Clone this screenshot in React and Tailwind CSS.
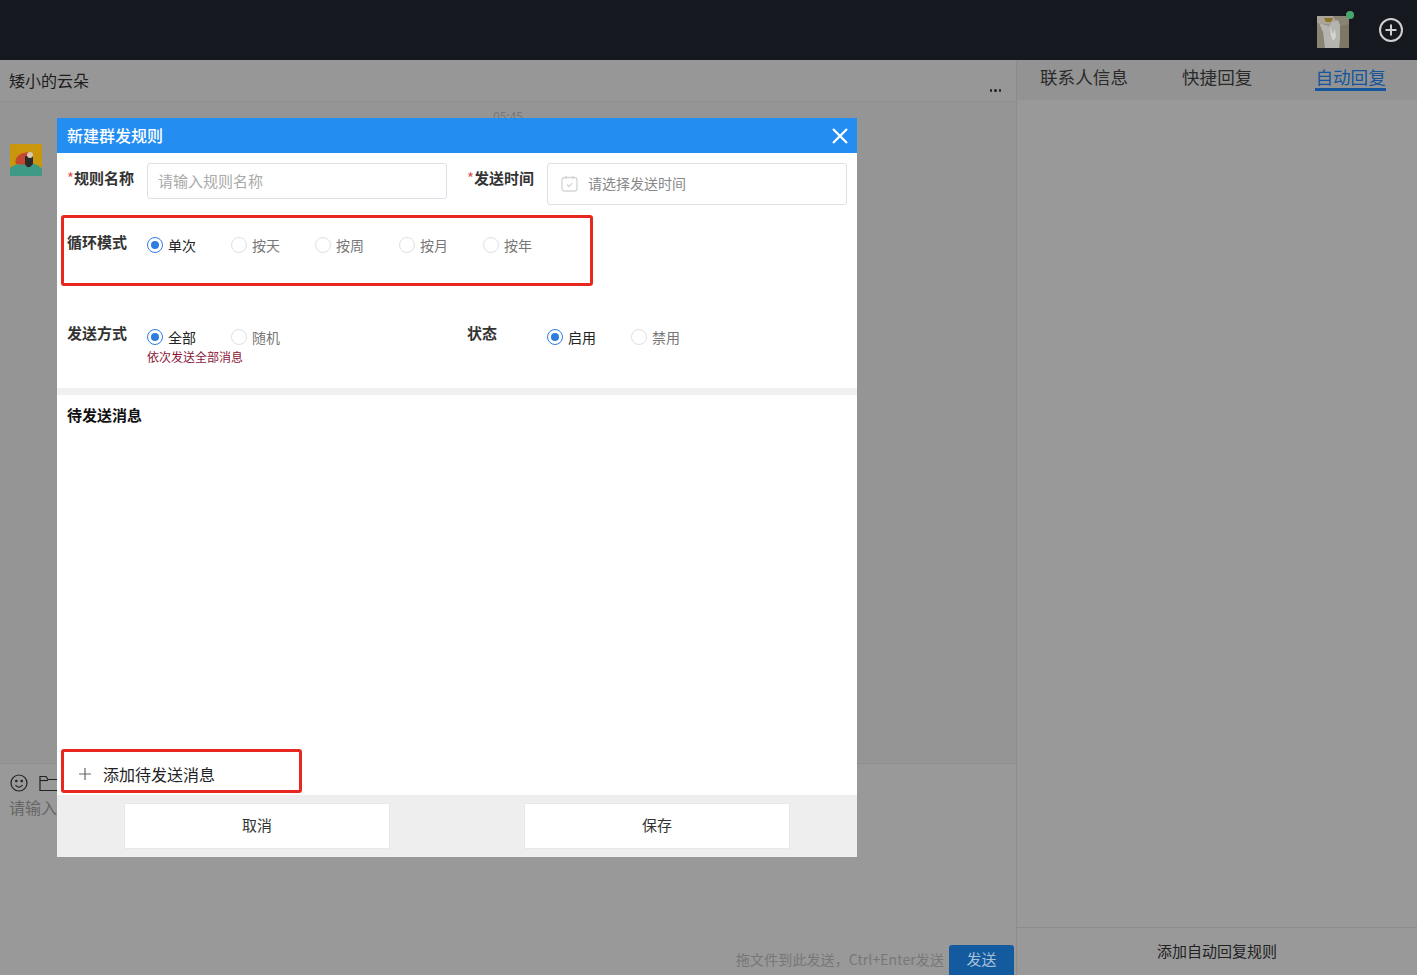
import React from "react";

const FONT = { fontFamily: '"Noto Sans CJK SC", "Liberation Sans", sans-serif' };

function Radio({ label, checked, w = "w-[84px]" }) {
  return (
    <div className={`flex items-center gap-[5px] ${w}`}>
      <span className={`flex h-4 w-4 items-center justify-center rounded-full border ${checked ? "border-[#2f7de1]" : "border-[#dcdfe6]"}`}>
        {checked && <span className="h-2 w-2 rounded-full bg-[#2f7de1]" />}
      </span>
      <span className={`text-[14px] leading-5 ${checked ? "text-[#222]" : "text-[#777]"}`}>{label}</span>
    </div>
  );
}

function Label({ children, req }) {
  return (
    <div className="w-[80px] shrink-0 pt-[1px] text-[15px] font-bold leading-5 text-[#333]">
      {req && <span className="font-normal text-[#d9534f]">*</span>}
      {children}
    </div>
  );
}

export default function App() {
  return (
    <div className="relative h-[975px] w-[1417px] overflow-hidden bg-[#999999]" style={FONT}>
      <header className="flex h-[60px] items-center justify-end bg-[#16181f] pr-[13px]">
        <div className="relative mr-[29px] mt-[3px] h-8 w-8">
          <svg width="32" height="32" viewBox="0 0 32 32">
            <rect width="32" height="32" fill="#8a8474" />
            <path d="M0 0h16l3 5-6 4-13-2z" fill="#a8a49a" />
            <path d="M7 2h9l-2 4H9z" fill="#8f7328" />
            <path d="M2 7l10 3 3-4 6-2 3 8-2 20H8l-2-16z" fill="#b4b4b0" />
            <path d="M13 10l3 8 2-5 1 8-3 4-2-5z" fill="#d4d4d2" />
            <path d="M23 10l9-2v24h-9z" fill="#7d7763" />
          </svg>
          <span className="absolute -right-[5px] -top-[5px] h-2 w-2 rounded-full bg-[#4aa66f]" />
        </div>
        <svg width="26" height="26" viewBox="0 0 26 26" fill="none" stroke="#cfcfcf" strokeWidth="2">
          <circle cx="13" cy="13" r="11" />
          <path d="M13 7.5v11M7.5 13h11" />
        </svg>
      </header>

      <div className="flex h-[915px]">
        <main className="flex w-[1016px] shrink-0 flex-col">
          <div className="relative h-[41px] bg-[#979797] pl-[9px] pt-[8px] text-[16px] leading-6 text-[#1c1c1c]">
            矮小的云朵
            <span className="absolute right-[15px] top-[29px] flex gap-[2px]">
              <i className="h-[2.5px] w-[2.5px] rounded-full bg-[#222]" />
              <i className="h-[2.5px] w-[2.5px] rounded-full bg-[#222]" />
              <i className="h-[2.5px] w-[2.5px] rounded-full bg-[#222]" />
            </span>
          </div>
          <div className="h-[662px] border-t border-[#8f8f8f] bg-[#959595]">
            <div className="pt-[6px] text-center text-[12px] leading-4 text-[#777]">05:45</div>
            <svg className="ml-[10px] mt-[20px] block" width="32" height="32" viewBox="0 0 32 32">
              <rect width="32" height="32" fill="#c9960c" />
              <path d="M0 32v-8c3-3 7-4 11-4h12c4 0 7 2 9 5v7z" fill="#3f9a85" />
              <path d="M6 20c-2-5 2-10 8-11l4-1 3 4-4 9z" fill="#c4482f" />
              <path d="M15 12h8v8l-3 3h-3l-2-3z" fill="#2a2a2a" />
              <circle cx="20" cy="11" r="3" fill="#d8c8b0" />
            </svg>
          </div>
          <div className="relative flex-1 border-t border-[#8d8d8d] bg-[#999999] pl-[10px] pt-[10px]">
            <div className="flex items-center gap-[11px] text-[#1c1c1c]">
              <svg width="18" height="18" viewBox="0 0 18 18" fill="none" stroke="#222" strokeWidth="1.2">
                <circle cx="9" cy="9" r="8" />
                <circle cx="6.3" cy="7" r=".7" fill="#222" />
                <circle cx="11.7" cy="7" r=".7" fill="#222" />
                <path d="M5.5 11c1 1.6 2.2 2.2 3.5 2.2s2.5-.6 3.5-2.2" />
              </svg>
              <svg width="20" height="17" viewBox="0 0 20 17" fill="none" stroke="#222" strokeWidth="1.2">
                <path d="M1 15.5V1.5h6l2 3h10v11z" />
                <path d="M1 5.5h8" />
              </svg>
            </div>
            <div className="-ml-[1px] mt-[5px] text-[16px] leading-5 text-[#666]">请输入</div>
            <div className="absolute bottom-0 right-[2px] flex items-center gap-[5px]">
              <span className="mb-[2px] text-[14px] leading-5 tracking-[0.1px] text-[#777]">拖文件到此发送，Ctrl+Enter发送</span>
              <button className="h-[30px] w-[65px] rounded-t-[3px] bg-[#145a9e] pb-[2px] text-[15px] leading-5 text-[#a8c0d8]">发送</button>
            </div>
          </div>
        </main>

        <aside className="flex flex-1 flex-col border-l border-[#8c8c8c]">
          <nav className="flex h-[40px] items-start bg-[#939393] pl-[23px] pt-[4px] text-[17.6px] leading-[26px] text-[#2a2a2a]">
            <span>联系人信息</span>
            <span className="ml-[54px]">快捷回复</span>
            <span className="ml-[63px] h-[27px] border-b-[3px] border-[#14559b] text-[#14559b]">自动回复</span>
          </nav>
          <div className="flex-1 bg-[#999999]" />
          <div className="flex h-[48px] items-center justify-center border-t border-[#8c8c8c] bg-[#999999] pb-[1px] text-[15px] text-[#222]">
            添加自动回复规则
          </div>
        </aside>
      </div>

      <section className="absolute left-[57px] top-[118px] flex h-[739px] w-[800px] flex-col bg-white">
        <div className="flex h-[35px] shrink-0 items-center justify-between bg-[#248df2] pl-[10px] pr-[8px]">
          <span className="pb-[2px] text-[16px] font-medium leading-5 text-white">新建群发规则</span>
          <svg width="18" height="18" viewBox="0 0 18 18" fill="none" stroke="#fff" strokeWidth="2.2">
            <path d="M2 2l14 14M16 2L2 16" />
          </svg>
        </div>

        <div className="flex px-[10px] pt-[10px]">
          <div className="flex w-[400px]">
            <div className="pt-[4px]"><Label req>规则名称</Label></div>
            <div className="flex h-9 w-[300px] items-center rounded-[3px] border border-[#dcdfe6] pl-[10px] text-[15px] text-[#aaa]">请输入规则名称</div>
          </div>
          <div className="flex flex-1">
            <div className="pt-[4px]"><Label req>发送时间</Label></div>
            <div className="flex h-[42px] flex-1 items-center gap-[10px] rounded-[3px] border border-[#dcdfe6] pb-[2px] pl-[13px] text-[14px] text-[#888]">
              <svg width="17" height="17" viewBox="0 0 17 17" fill="none" stroke="#d5d5d5" strokeWidth="1.3">
                <rect x="1" y="2.5" width="15" height="13.5" rx="2.5" />
                <path d="M5 1v3M12 1v3" />
                <path d="M6 9.5l2 2 3.2-3.4" />
              </svg>
              请选择发送时间
            </div>
          </div>
        </div>

        <div className="flex px-[10px] pt-[25px]">
          <div className="pt-[1px]"><Label>循环模式</Label></div>
          <div className="flex pt-[5px]">
            <Radio label="单次" checked />
            <Radio label="按天" />
            <Radio label="按周" />
            <Radio label="按月" />
            <Radio label="按年" />
          </div>
        </div>

        <div className="flex px-[10px] pt-[67px]">
          <div className="flex w-[400px]">
            <Label>发送方式</Label>
            <div className="pt-[5px]">
              <div className="flex">
                <Radio label="全部" checked />
                <Radio label="随机" />
              </div>
              <div className="mt-[2px] text-[12px] leading-4 text-[#8a1538]">依次发送全部消息</div>
            </div>
          </div>
          <div className="flex items-start">
            <Label>状态</Label>
            <div className="flex pt-[5px]">
              <Radio label="启用" checked />
              <Radio label="禁用" />
            </div>
          </div>
        </div>

        <div className="mt-[23px] h-[7px] shrink-0 bg-[#f0f0f0]" />
        <div className="px-[10px] pt-[10px] text-[15px] font-bold leading-5 text-[#111]">待发送消息</div>

        <div className="mt-auto flex items-center gap-[11px] pb-[11px] pl-[21px] text-[16px] leading-5 text-[#222]">
          <svg width="14" height="14" viewBox="0 0 14 14" fill="none" stroke="#666" strokeWidth="1.2">
            <path d="M7 1v12M1 7h12" />
          </svg>
          添加待发送消息
        </div>

        <div className="flex h-[62px] shrink-0 items-center justify-around bg-[#eeeeee]">
          <button className="h-[46px] w-[266px] border border-[#e8e8e8] bg-white pb-[1px] text-[15px] text-[#333]">取消</button>
          <button className="h-[46px] w-[266px] border border-[#e8e8e8] bg-white pb-[1px] text-[15px] text-[#333]">保存</button>
        </div>
      </section>

      <div className="absolute left-[61px] top-[215px] h-[71px] w-[532px] rounded-[3px] border-[3px] border-[#e8281f]" />
      <div className="absolute left-[61px] top-[749px] h-[44px] w-[241px] rounded-[3px] border-[3px] border-[#e8281f]" />
    </div>
  );
}
